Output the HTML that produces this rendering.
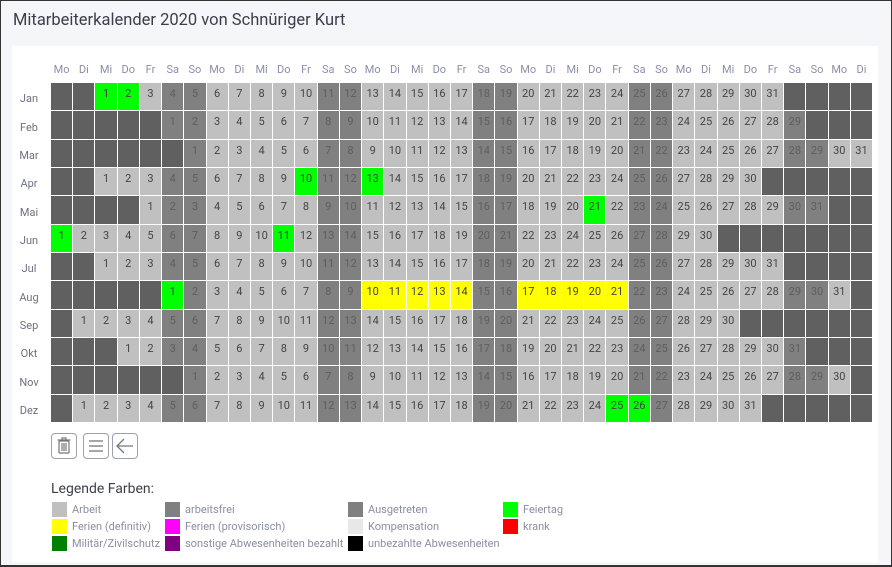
<!DOCTYPE html><html><head><meta charset="utf-8"><style>
*{margin:0;padding:0;box-sizing:border-box}
body{width:892px;height:567px;overflow:hidden;background:#f5f6fa;font-family:"Roboto","Liberation Sans",sans-serif;position:relative;border:1px solid #333;border-bottom:2px solid #333}
h1{position:absolute;left:12px;top:10px;font-size:16.5px;font-weight:normal;color:#3b3f4a}
.panel{position:absolute;left:11px;top:45px;width:866px;height:516px;background:#fff}
.hd{position:absolute;left:50px;top:62px;display:grid;grid-template-columns:repeat(37,21.22px);column-gap:1px;font-size:11px;color:#8a8fa8;text-align:center}
.ml{position:absolute;left:8px;width:40px;text-align:center;font-size:11px;color:#6c7080}
.g{position:absolute;left:50px;top:82px;display:grid;grid-template-columns:repeat(37,21.22px);grid-auto-rows:27.33px;gap:1px}
.g i{font-style:normal;font-size:11px;text-align:center;padding-top:4px;color:#444}
.e{background:#606060}.w{background:#c0c0c0}.f{background:#808080;color:#5e5e5e!important}.n{background:#00ff00}.y{background:#ffff00}
.btn{position:absolute;top:432px;width:26px;height:26px;border:1px solid #9aa0ad;border-radius:4px;background:#fff}
.lg{position:absolute;left:50px;top:480px;font-size:14px;color:#3b3f4a}
.s{position:absolute;width:15px;height:15px}
.t{position:absolute;font-size:11px;color:#8a8fa0}
</style></head><body>
<h1>Mitarbeiterkalender 2020 von Schnüriger Kurt</h1>
<div class="panel"></div>
<div class="hd"><span>Mo</span><span>Di</span><span>Mi</span><span>Do</span><span>Fr</span><span>Sa</span><span>So</span><span>Mo</span><span>Di</span><span>Mi</span><span>Do</span><span>Fr</span><span>Sa</span><span>So</span><span>Mo</span><span>Di</span><span>Mi</span><span>Do</span><span>Fr</span><span>Sa</span><span>So</span><span>Mo</span><span>Di</span><span>Mi</span><span>Do</span><span>Fr</span><span>Sa</span><span>So</span><span>Mo</span><span>Di</span><span>Mi</span><span>Do</span><span>Fr</span><span>Sa</span><span>So</span><span>Mo</span><span>Di</span></div>
<div class="ml" style="top:91px">Jan</div><div class="ml" style="top:120px">Feb</div><div class="ml" style="top:148px">Mar</div><div class="ml" style="top:176px">Apr</div><div class="ml" style="top:205px">Mai</div><div class="ml" style="top:233px">Jun</div><div class="ml" style="top:261px">Jul</div><div class="ml" style="top:290px">Aug</div><div class="ml" style="top:318px">Sep</div><div class="ml" style="top:346px">Okt</div><div class="ml" style="top:375px">Nov</div><div class="ml" style="top:403px">Dez</div>
<div class="g">
<i class=e></i><i class=e></i><i class=n>1</i><i class=n>2</i><i class=w>3</i><i class=f>4</i><i class=f>5</i><i class=w>6</i><i class=w>7</i><i class=w>8</i><i class=w>9</i><i class=w>10</i><i class=f>11</i><i class=f>12</i><i class=w>13</i><i class=w>14</i><i class=w>15</i><i class=w>16</i><i class=w>17</i><i class=f>18</i><i class=f>19</i><i class=w>20</i><i class=w>21</i><i class=w>22</i><i class=w>23</i><i class=w>24</i><i class=f>25</i><i class=f>26</i><i class=w>27</i><i class=w>28</i><i class=w>29</i><i class=w>30</i><i class=w>31</i><i class=e></i><i class=e></i><i class=e></i><i class=e></i>
<i class=e></i><i class=e></i><i class=e></i><i class=e></i><i class=e></i><i class=f>1</i><i class=f>2</i><i class=w>3</i><i class=w>4</i><i class=w>5</i><i class=w>6</i><i class=w>7</i><i class=f>8</i><i class=f>9</i><i class=w>10</i><i class=w>11</i><i class=w>12</i><i class=w>13</i><i class=w>14</i><i class=f>15</i><i class=f>16</i><i class=w>17</i><i class=w>18</i><i class=w>19</i><i class=w>20</i><i class=w>21</i><i class=f>22</i><i class=f>23</i><i class=w>24</i><i class=w>25</i><i class=w>26</i><i class=w>27</i><i class=w>28</i><i class=f>29</i><i class=e></i><i class=e></i><i class=e></i>
<i class=e></i><i class=e></i><i class=e></i><i class=e></i><i class=e></i><i class=e></i><i class=f>1</i><i class=w>2</i><i class=w>3</i><i class=w>4</i><i class=w>5</i><i class=w>6</i><i class=f>7</i><i class=f>8</i><i class=w>9</i><i class=w>10</i><i class=w>11</i><i class=w>12</i><i class=w>13</i><i class=f>14</i><i class=f>15</i><i class=w>16</i><i class=w>17</i><i class=w>18</i><i class=w>19</i><i class=w>20</i><i class=f>21</i><i class=f>22</i><i class=w>23</i><i class=w>24</i><i class=w>25</i><i class=w>26</i><i class=w>27</i><i class=f>28</i><i class=f>29</i><i class=w>30</i><i class=w>31</i>
<i class=e></i><i class=e></i><i class=w>1</i><i class=w>2</i><i class=w>3</i><i class=f>4</i><i class=f>5</i><i class=w>6</i><i class=w>7</i><i class=w>8</i><i class=w>9</i><i class=n>10</i><i class=f>11</i><i class=f>12</i><i class=n>13</i><i class=w>14</i><i class=w>15</i><i class=w>16</i><i class=w>17</i><i class=f>18</i><i class=f>19</i><i class=w>20</i><i class=w>21</i><i class=w>22</i><i class=w>23</i><i class=w>24</i><i class=f>25</i><i class=f>26</i><i class=w>27</i><i class=w>28</i><i class=w>29</i><i class=w>30</i><i class=e></i><i class=e></i><i class=e></i><i class=e></i><i class=e></i>
<i class=e></i><i class=e></i><i class=e></i><i class=e></i><i class=w>1</i><i class=f>2</i><i class=f>3</i><i class=w>4</i><i class=w>5</i><i class=w>6</i><i class=w>7</i><i class=w>8</i><i class=f>9</i><i class=f>10</i><i class=w>11</i><i class=w>12</i><i class=w>13</i><i class=w>14</i><i class=w>15</i><i class=f>16</i><i class=f>17</i><i class=w>18</i><i class=w>19</i><i class=w>20</i><i class=n>21</i><i class=w>22</i><i class=f>23</i><i class=f>24</i><i class=w>25</i><i class=w>26</i><i class=w>27</i><i class=w>28</i><i class=w>29</i><i class=f>30</i><i class=f>31</i><i class=e></i><i class=e></i>
<i class=n>1</i><i class=w>2</i><i class=w>3</i><i class=w>4</i><i class=w>5</i><i class=f>6</i><i class=f>7</i><i class=w>8</i><i class=w>9</i><i class=w>10</i><i class=n>11</i><i class=w>12</i><i class=f>13</i><i class=f>14</i><i class=w>15</i><i class=w>16</i><i class=w>17</i><i class=w>18</i><i class=w>19</i><i class=f>20</i><i class=f>21</i><i class=w>22</i><i class=w>23</i><i class=w>24</i><i class=w>25</i><i class=w>26</i><i class=f>27</i><i class=f>28</i><i class=w>29</i><i class=w>30</i><i class=e></i><i class=e></i><i class=e></i><i class=e></i><i class=e></i><i class=e></i><i class=e></i>
<i class=e></i><i class=e></i><i class=w>1</i><i class=w>2</i><i class=w>3</i><i class=f>4</i><i class=f>5</i><i class=w>6</i><i class=w>7</i><i class=w>8</i><i class=w>9</i><i class=w>10</i><i class=f>11</i><i class=f>12</i><i class=w>13</i><i class=w>14</i><i class=w>15</i><i class=w>16</i><i class=w>17</i><i class=f>18</i><i class=f>19</i><i class=w>20</i><i class=w>21</i><i class=w>22</i><i class=w>23</i><i class=w>24</i><i class=f>25</i><i class=f>26</i><i class=w>27</i><i class=w>28</i><i class=w>29</i><i class=w>30</i><i class=w>31</i><i class=e></i><i class=e></i><i class=e></i><i class=e></i>
<i class=e></i><i class=e></i><i class=e></i><i class=e></i><i class=e></i><i class=n>1</i><i class=f>2</i><i class=w>3</i><i class=w>4</i><i class=w>5</i><i class=w>6</i><i class=w>7</i><i class=f>8</i><i class=f>9</i><i class=y>10</i><i class=y>11</i><i class=y>12</i><i class=y>13</i><i class=y>14</i><i class=f>15</i><i class=f>16</i><i class=y>17</i><i class=y>18</i><i class=y>19</i><i class=y>20</i><i class=y>21</i><i class=f>22</i><i class=f>23</i><i class=w>24</i><i class=w>25</i><i class=w>26</i><i class=w>27</i><i class=w>28</i><i class=f>29</i><i class=f>30</i><i class=w>31</i><i class=e></i>
<i class=e></i><i class=w>1</i><i class=w>2</i><i class=w>3</i><i class=w>4</i><i class=f>5</i><i class=f>6</i><i class=w>7</i><i class=w>8</i><i class=w>9</i><i class=w>10</i><i class=w>11</i><i class=f>12</i><i class=f>13</i><i class=w>14</i><i class=w>15</i><i class=w>16</i><i class=w>17</i><i class=w>18</i><i class=f>19</i><i class=f>20</i><i class=w>21</i><i class=w>22</i><i class=w>23</i><i class=w>24</i><i class=w>25</i><i class=f>26</i><i class=f>27</i><i class=w>28</i><i class=w>29</i><i class=w>30</i><i class=e></i><i class=e></i><i class=e></i><i class=e></i><i class=e></i><i class=e></i>
<i class=e></i><i class=e></i><i class=e></i><i class=w>1</i><i class=w>2</i><i class=f>3</i><i class=f>4</i><i class=w>5</i><i class=w>6</i><i class=w>7</i><i class=w>8</i><i class=w>9</i><i class=f>10</i><i class=f>11</i><i class=w>12</i><i class=w>13</i><i class=w>14</i><i class=w>15</i><i class=w>16</i><i class=f>17</i><i class=f>18</i><i class=w>19</i><i class=w>20</i><i class=w>21</i><i class=w>22</i><i class=w>23</i><i class=f>24</i><i class=f>25</i><i class=w>26</i><i class=w>27</i><i class=w>28</i><i class=w>29</i><i class=w>30</i><i class=f>31</i><i class=e></i><i class=e></i><i class=e></i>
<i class=e></i><i class=e></i><i class=e></i><i class=e></i><i class=e></i><i class=e></i><i class=f>1</i><i class=w>2</i><i class=w>3</i><i class=w>4</i><i class=w>5</i><i class=w>6</i><i class=f>7</i><i class=f>8</i><i class=w>9</i><i class=w>10</i><i class=w>11</i><i class=w>12</i><i class=w>13</i><i class=f>14</i><i class=f>15</i><i class=w>16</i><i class=w>17</i><i class=w>18</i><i class=w>19</i><i class=w>20</i><i class=f>21</i><i class=f>22</i><i class=w>23</i><i class=w>24</i><i class=w>25</i><i class=w>26</i><i class=w>27</i><i class=f>28</i><i class=f>29</i><i class=w>30</i><i class=e></i>
<i class=e></i><i class=w>1</i><i class=w>2</i><i class=w>3</i><i class=w>4</i><i class=f>5</i><i class=f>6</i><i class=w>7</i><i class=w>8</i><i class=w>9</i><i class=w>10</i><i class=w>11</i><i class=f>12</i><i class=f>13</i><i class=w>14</i><i class=w>15</i><i class=w>16</i><i class=w>17</i><i class=w>18</i><i class=f>19</i><i class=f>20</i><i class=w>21</i><i class=w>22</i><i class=w>23</i><i class=w>24</i><i class=n>25</i><i class=n>26</i><i class=f>27</i><i class=w>28</i><i class=w>29</i><i class=w>30</i><i class=w>31</i><i class=e></i><i class=e></i><i class=e></i><i class=e></i><i class=e></i>
</div>
<div class="btn" style="left:50px"><svg width="24" height="24" viewBox="0 0 24 24" fill="none" stroke="#777" stroke-width="1.2"><rect x="7" y="7" width="10" height="12" rx="1"/><line x1="5.5" y1="6" x2="18.5" y2="6"/><rect x="10" y="4" width="4" height="2"/><line x1="10" y1="9" x2="10" y2="17"/><line x1="12" y1="9" x2="12" y2="17"/><line x1="14" y1="9" x2="14" y2="17"/></svg></div>
<div class="btn" style="left:82px"><svg width="24" height="24" viewBox="0 0 24 24" fill="none" stroke="#777" stroke-width="1.3"><line x1="5" y1="7" x2="19" y2="7"/><line x1="5" y1="12" x2="19" y2="12"/><line x1="5" y1="17" x2="19" y2="17"/></svg></div>
<div class="btn" style="left:111px"><svg width="24" height="24" viewBox="0 0 24 24" fill="none" stroke="#777" stroke-width="1.3"><path d="M11 5 L4 12 L11 19 M4 12 H20"/></svg></div>
<div class="lg">Legende Farben:</div>
<div class="s" style="left:51px;top:501px;background:#c0c0c0"></div><div class="t" style="left:71px;top:502px">Arbeit</div>
<div class="s" style="left:164px;top:501px;background:#808080"></div><div class="t" style="left:184px;top:502px">arbeitsfrei</div>
<div class="s" style="left:347px;top:501px;background:#808080"></div><div class="t" style="left:367px;top:502px">Ausgetreten</div>
<div class="s" style="left:502px;top:501px;background:#00ff00"></div><div class="t" style="left:522px;top:502px">Feiertag</div>
<div class="s" style="left:51px;top:518px;background:#ffff00"></div><div class="t" style="left:71px;top:519px">Ferien (definitiv)</div>
<div class="s" style="left:164px;top:518px;background:#ff00ff"></div><div class="t" style="left:184px;top:519px">Ferien (provisorisch)</div>
<div class="s" style="left:347px;top:518px;background:#e8e8e8"></div><div class="t" style="left:367px;top:519px">Kompensation</div>
<div class="s" style="left:502px;top:518px;background:#ff0000"></div><div class="t" style="left:522px;top:519px">krank</div>
<div class="s" style="left:51px;top:535px;background:#008000"></div><div class="t" style="left:71px;top:536px">Militär/Zivilschutz</div>
<div class="s" style="left:164px;top:535px;background:#800080"></div><div class="t" style="left:184px;top:536px">sonstige Abwesenheiten bezahlt</div>
<div class="s" style="left:347px;top:535px;background:#000"></div><div class="t" style="left:367px;top:536px">unbezahlte Abwesenheiten</div>
</body></html>
